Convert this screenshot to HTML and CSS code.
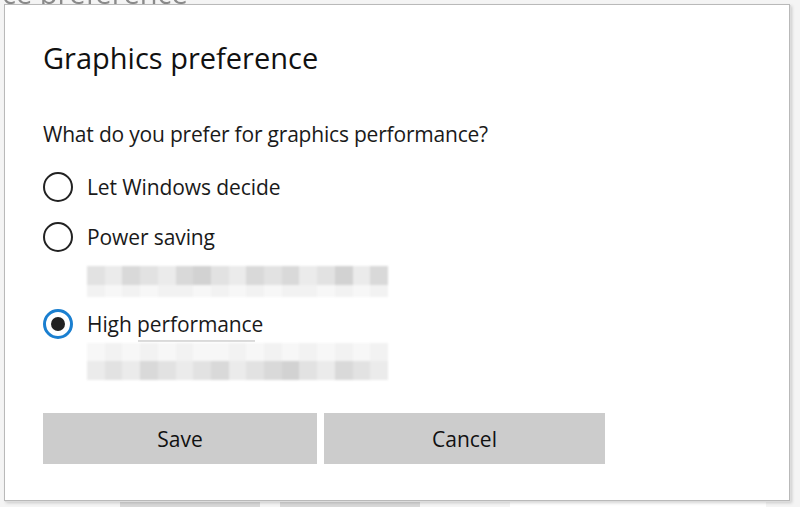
FILE: index.html
```html
<!DOCTYPE html>
<html lang="en">
<head>
<meta charset="utf-8">
<title>Graphics preference</title>
<link rel="stylesheet" href="styles.css">
</head>
<body>
<div class="desk">
  <div class="bg-title">ce preference</div>
  <div class="bg-buttons"><span class="bg-btn">Options</span><span class="bg-btn">Remove</span></div>
  <div class="bg-line"></div>
  <div class="dialog">
    <h1 class="title">Graphics preference</h1>
    <p class="question">What do you prefer for graphics performance?</p>
    <div class="options">
      <div class="opt"><span class="radio"></span><span class="label">Let Windows decide</span></div>
      <div class="opt"><span class="radio"></span><span class="label">Power saving</span></div>
      <div class="blur blur-a">
        <div class="row dark">
          <i class="b2"></i><i class="b3"></i><i class="b1"></i><i class="b2"></i><i class="b3"></i><i class="b1"></i><i class="b4"></i><i class="b2"></i><i class="b3"></i><i class="b1"></i><i class="b2"></i><i class="b1"></i><i class="b3"></i><i class="b2"></i><i class="b4"></i><i class="b3"></i><i class="b1"></i>
        </div>
        <div class="row light">
          <i class="l1"></i><i class="l2"></i><i class="l1"></i><i class="l2"></i><i class="l1"></i><i class="l1"></i><i class="l2"></i><i class="l1"></i><i class="l2"></i><i class="l1"></i><i class="l2"></i><i class="l1"></i><i class="l1"></i><i class="l2"></i><i class="l1"></i><i class="l2"></i><i class="l1"></i>
        </div>
      </div>
      <div class="opt selected"><span class="radio"></span><span class="label">High <span class="ul">performance</span></span></div>
      <div class="blur blur-b">
        <div class="row light">
          <i class="l2"></i><i class="l1"></i><i class="l2"></i><i class="l1"></i><i class="l2"></i><i class="l1"></i><i class="l2"></i><i class="l2"></i><i class="l1"></i><i class="l2"></i><i class="l1"></i><i class="l2"></i><i class="l1"></i><i class="l2"></i><i class="l1"></i><i class="l2"></i><i class="l1"></i>
        </div>
        <div class="row dark">
          <i class="b3"></i><i class="b2"></i><i class="b3"></i><i class="b1"></i><i class="b2"></i><i class="b3"></i><i class="b2"></i><i class="b1"></i><i class="b3"></i><i class="b2"></i><i class="b1"></i><i class="b4"></i><i class="b2"></i><i class="b3"></i><i class="b1"></i><i class="b2"></i><i class="b3"></i>
        </div>
      </div>
    </div>
    <div class="buttons">
      <button class="btn">Save</button>
      <button class="btn">Cancel</button>
    </div>
  </div>
</div>
</body>
</html>
```
FILE: styles.css
```css
* { box-sizing: border-box; }
html, body { margin: 0; padding: 0; }
body {
  width: 800px;
  height: 507px;
  overflow: hidden;
  background: #f4f4f4;
  font-family: "Open Sans", "Noto Sans", sans-serif;
  color: #111;
}
.desk {
  position: relative;
  width: 800px;
  height: 507px;
  padding: 4px 0 0 4px;
}
.bg-title {
  position: absolute;
  left: 2px;
  top: -24px;
  font-size: 29px;
  line-height: 34px;
  color: #8a8a8a;
  filter: blur(0.6px);
}
.bg-buttons {
  position: absolute;
  left: 120px;
  top: 497px;
  display: flex;
  gap: 20px;
}
.bg-btn {
  display: block;
  width: 140px;
  height: 30px;
  padding-top: 4px;
  background: #d8d8d8;
  color: #777;
  font-size: 20px;
  line-height: 26px;
  text-align: center;
  filter: blur(0.6px);
}
.bg-line {
  position: absolute;
  left: 510px;
  top: 499px;
  width: 256px;
  height: 8px;
  background: #ffffff;
}
.dialog {
  position: relative;
  width: 786px;
  height: 497px;
  background: #fff;
  border: 1px solid #b9b9b9;
  box-shadow: 1px 1px 0 #dcdcdc, 2px 2px 3px rgba(0,0,0,0.18);
  padding: 0 0 0 38px;
}
.title {
  margin: 0;
  padding-top: 33px;
  font-size: 29px;
  line-height: 40px;
  font-weight: 400;
  letter-spacing: 0;
  color: #111;
}
.question {
  margin: 42px 0 0 0;
  font-size: 21px;
  line-height: 28px;
  letter-spacing: -0.2px;
  color: #1a1a1a;
}
.options {
  display: flex;
  flex-direction: column;
}
.opt {
  display: flex;
  align-items: center;
  gap: 14px;
  height: 30px;
  margin-top: 24px;
}
.opt + .opt { margin-top: 20px; }
.blur + .opt { margin-top: 12px; }
.radio {
  width: 30px;
  height: 30px;
  border-radius: 50%;
  border: 2.5px solid #222;
  flex: none;
  display: flex;
  align-items: center;
  justify-content: center;
}
.opt.selected .radio {
  border: 3px solid #1a7fd0;
}
.opt.selected .radio::after {
  content: "";
  width: 14px;
  height: 14px;
  border-radius: 50%;
  background: #222;
}
.label {
  font-size: 21px;
  line-height: 28px;
  letter-spacing: -0.1px;
  color: #1a1a1a;
  position: relative;
}
.ul {
  position: relative;
}
.ul::after {
  content: "";
  position: absolute;
  left: 1px;
  right: 8px;
  bottom: -4px;
  height: 2px;
  background: #dadada;
}
.blur {
  margin-left: 44px;
  width: 301px;
  display: flex;
  flex-direction: column;
  filter: blur(1px);
}
.blur-a { margin-top: 14px; }
.blur-a .dark { height: 19px; }
.blur-a .light { height: 12px; }
.blur-b { margin-top: 4px; }
.blur-b .light { height: 18px; }
.blur-b .dark { height: 19px; }
.row { display: flex; }
.row i { flex: 1; display: block; }
.b1 { background: #d9d9d9; }
.b2 { background: #e2e2e2; }
.b3 { background: #ebebeb; }
.b4 { background: #d2d2d2; }
.l1 { background: #f2f2f2; }
.l2 { background: #f7f7f7; }
.buttons {
  display: flex;
  gap: 7px;
  margin-top: 33px;
}
.btn {
  width: 274px;
  height: 51px;
  border: 0;
  background: #cccccc;
  font-family: "Open Sans", "Noto Sans", sans-serif;
  font-size: 21px;
  color: #111;
  padding: 0;
}
.btn + .btn { width: 281px; }
```
